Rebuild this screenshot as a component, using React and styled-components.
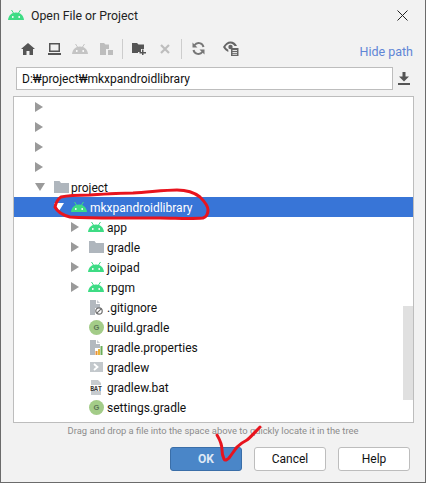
import React from 'react';
import styled, { createGlobalStyle } from 'styled-components';

const GlobalStyle = createGlobalStyle`
  html, body { margin: 0; padding: 0; background: #f2f2f2; }
  body { font-family: Roboto, "Noto Sans CJK KR", sans-serif; font-size: 12px; }
`;

const Dialog = styled.div`
  position: relative;
  width: 426px;
  height: 483px;
  box-sizing: border-box;
  background: #f2f2f2;
  border: 1px solid #6b6b6b;
  border-top: none;
  overflow: hidden;
  color: #111;
`;

const TitleBar = styled.div`
  display: flex;
  align-items: center;
  height: 30px;
  padding-left: 7px;
  gap: 7px;
  font-size: 12.3px;
  color: #222;
`;

const TitleText = styled.span`
  padding-top: 2px;
`;

const CloseButton = styled.button`
  margin-left: auto;
  width: 46px;
  height: 30px;
  border: none;
  padding: 0;
  background: none;
  display: flex;
  align-items: center;
  justify-content: center;
`;

const Toolbar = styled.div`
  display: flex;
  align-items: center;
  height: 37px;
  padding-left: 18px;
  padding-right: 12px;
  gap: 8px;
`;

const ToolIcon = styled.span`
  width: 18px;
  height: 18px;
  margin-left: ${p => p.$push || 0}px;
  display: flex;
  align-items: center;
  justify-content: center;
  flex: none;
`;

const ToolSep = styled.span`
  width: 1px;
  height: 20px;
  background: #cdcdcd;
  margin: 0 -1px;
  flex: none;
`;

const HidePath = styled.a`
  margin-left: auto;
  margin-top: 6px;
  color: #5f86d6;
  font-size: 12.5px;
`;

const PathRow = styled.div`
  display: flex;
  align-items: center;
  padding-left: 15px;
  padding-right: 15px;
  gap: 5px;
`;

const PathInput = styled.div`
  flex: 1;
  height: 23px;
  box-sizing: border-box;
  border: 1px solid #bdbdbd;
  background: #fff;
  padding-left: 5px;
  line-height: 23px;
  font-size: 12px;
  color: #111;
`;

const TreeBox = styled.div`
  position: relative;
  margin: 6px 11px 0 12px;
  height: 327px;
  box-sizing: border-box;
  border: 1px solid #bdbdbd;
  background: #fff;
`;

const ScrollThumb = styled.div`
  position: absolute;
  right: 0;
  top: 209px;
  width: 10px;
  height: 94px;
  background: #e0e0e0;
`;

const Row = styled.div`
  display: flex;
  align-items: center;
  height: 20px;
  padding-left: ${p => p.$indent}px;
  background: ${p => (p.$selected ? '#3875d7' : 'transparent')};
  color: ${p => (p.$selected ? '#fff' : '#111')};
  font-size: 12px;
`;

const RowLabel = styled.span`
  padding-top: 2px;
`;

const ArrowSlot = styled.span`
  width: 16px;
  display: flex;
  align-items: center;
  flex: none;
`;

const IconSlot = styled.span`
  width: 18px;
  height: 16px;
  box-sizing: border-box;
  padding-left: ${p => p.$shift || 0}px;
  display: flex;
  align-items: center;
  justify-content: center;
  flex: none;
  margin-right: 2px;
`;

const Hint = styled.div`
  text-align: center;
  font-size: 9.4px;
  color: #8c8c8c;
  height: 17px;
  line-height: 14px;
  margin-top: 1px;
`;

const ButtonRow = styled.div`
  display: flex;
  justify-content: flex-end;
  gap: 12px;
  padding-right: 15px;
  margin-top: 6px;
`;

const DialogButton = styled.button`
  width: 72px;
  height: 24px;
  box-sizing: border-box;
  border-radius: 3px;
  border: 1px solid ${p => (p.$primary ? '#3a6ea8' : '#bdbdbd')};
  background: ${p => (p.$primary ? '#4a86c8' : '#fff')};
  color: ${p => (p.$primary ? '#dfe9f5' : '#111')};
  font-family: inherit;
  font-size: 12px;
  font-weight: ${p => (p.$primary ? 700 : 400)};
  padding: 0;
`;

const Scribble = styled.svg`
  position: absolute;
  left: -1px;
  top: 0;
  pointer-events: none;
`;

const Android = ({ color = '#3ddc84', muted }) => (
  <svg width="16" height="10" viewBox="0 0 16 10">
    <path d="M0 10C.3 6 3.400 2.500 8 2.500s7.700 3.500 8 7.500z" fill={muted ? '#c4c4c4' : color} />
    <path d="M3.500 0l2 3M12.500 0l-2 3" stroke={muted ? '#c4c4c4' : color} strokeWidth="1" />
    <circle cx="4.800" cy="7" r=".9" fill="#fff" />
    <circle cx="11.200" cy="7" r=".9" fill="#fff" />
  </svg>
);

const Folder = ({ color = '#afb6bd' }) => (
  <svg width="15" height="12" viewBox="0 0 15 12">
    <path d="M0 0h5.500l1.500 2h8v10H0z" fill={color} />
  </svg>
);

const GradleBadge = () => (
  <svg width="15" height="15" viewBox="0 0 15 15">
    <circle cx="7.500" cy="7.500" r="7.500" fill="#a3cc88" />
    <text x="7.500" y="10.300" textAnchor="middle" fontSize="7.500" fontWeight="700" fontFamily="Liberation Sans, sans-serif" fill="#5b7558">G</text>
  </svg>
);

const FileBase = ({ children }) => (
  <svg width="14" height="15" viewBox="0 0 14 15">
    <path d="M1 0h6v4h4v4H6v7H1z" fill="#b3b9bf" />
    <path d="M8 0l3 3H8z" fill="#c9ced2" />
    {children}
  </svg>
);

const GitIgnore = () => (
  <FileBase>
    <circle cx="10" cy="11" r="3.200" fill="#fff" stroke="#6d6d6d" strokeWidth="1.200" />
    <path d="M7.800 13.200l4.400-4.400" stroke="#6d6d6d" strokeWidth="1.200" />
  </FileBase>
);

const Props = () => (
  <FileBase>
    <rect x="6.500" y="11" width="2" height="4" fill="#e8923a" />
    <rect x="9" y="9" width="2" height="6" fill="#e8b53a" />
    <rect x="11.500" y="6" width="2" height="9" fill="#6cae5a" />
  </FileBase>
);

const Shell = () => (
  <svg width="13" height="10" viewBox="0 0 13 10">
    <rect width="13" height="10" fill="#c3c8cc" />
    <path d="M4 2l3.500 3-3.500 3" fill="none" stroke="#fff" strokeWidth="1.800" />
  </svg>
);

const Bat = () => (
  <svg width="14" height="15" viewBox="0 0 14 15">
    <path d="M2 0h7l3 3v12H2z" fill="#c7cbce" />
    <rect x="0" y="5" width="14" height="6" fill="#fff" />
    <text x="7" y="10.500" textAnchor="middle" fontSize="6.500" fontWeight="700" fontFamily="Liberation Mono, monospace" fill="#333">BAT</text>
  </svg>
);

const ArrowRight = () => (
  <svg width="8" height="10" viewBox="0 0 8 10"><path d="M0 0l8 5-8 5z" fill="#9a9a9a" /></svg>
);

const ArrowDown = ({ color = '#9a9a9a' }) => (
  <svg width="10" height="8" viewBox="0 0 10 8"><path d="M0 0h10L5 8z" fill={color} /></svg>
);

const rows = [
  { indent: 21, arrow: 'right' },
  { indent: 21, arrow: 'right' },
  { indent: 21, arrow: 'right' },
  { indent: 21, arrow: 'right' },
  { indent: 21, arrow: 'down', icon: <Folder />, shift: 2, label: 'project' },
  { indent: 40, arrow: 'downWhite', icon: <Android />, label: 'mkxpandroidlibrary', selected: true },
  { indent: 57, arrow: 'right', icon: <Android />, label: 'app' },
  { indent: 57, arrow: 'right', icon: <Folder />, label: 'gradle' },
  { indent: 57, arrow: 'right', icon: <Android />, label: 'joipad' },
  { indent: 57, arrow: 'right', icon: <Android />, label: 'rpgm' },
  { indent: 73, icon: <GitIgnore />, label: '.gitignore' },
  { indent: 73, icon: <GradleBadge />, label: 'build.gradle' },
  { indent: 73, icon: <Props />, label: 'gradle.properties' },
  { indent: 73, icon: <Shell />, label: 'gradlew' },
  { indent: 73, icon: <Bat />, label: 'gradlew.bat' },
  { indent: 73, icon: <GradleBadge />, label: 'settings.gradle' },
];

const c = '#555';
const d = '#bdbdbd';

export default function App() {
  return (
    <>
      <GlobalStyle />
      <Dialog>
        <TitleBar>
          <Android />
          <TitleText>Open File or Project</TitleText>
          <CloseButton>
            <svg width="11" height="11" viewBox="0 0 11 11"><path d="M.5.5l10 10M10.500.5l-10 10" stroke="#222" strokeWidth="1" /></svg>
          </CloseButton>
        </TitleBar>
        <Toolbar>
          <ToolIcon><svg width="14" height="12" viewBox="0 0 14 12"><path d="M7 0l7 6h-2v6H8.500V8h-3v4H2V6H0z" fill={c} /></svg></ToolIcon>
          <ToolIcon><svg width="13" height="12" viewBox="0 0 13 12"><path d="M1 0h11v9H1zM2.500 1.500v6h8v-6zM0 10h13v2H0z" fillRule="evenodd" fill={c} /></svg></ToolIcon>
          <ToolIcon><Android muted /></ToolIcon>
          <ToolIcon><svg width="13" height="12" viewBox="0 0 13 12"><path d="M0 0h4l1.500 1.500H9V6H6v6H0z" fill={d} /><rect x="8" y="7" width="5" height="5" fill={d} /></svg></ToolIcon>
          <ToolSep />
          <ToolIcon><svg width="15" height="12" viewBox="0 0 15 12"><path d="M0 0h5l1.500 1.500H12V6H9v3H6v1H0z" fill={c} /><path d="M10 6.500h1.500V9H14v1.500h-2.500V12H10v-1.500H7.500V9H10z" fill={c} /></svg></ToolIcon>
          <ToolIcon><svg width="10" height="10" viewBox="0 0 10 10"><path d="M1 1l8 8M9 1l-8 8" stroke={d} strokeWidth="2.200" /></svg></ToolIcon>
          <ToolSep />
          <ToolIcon><svg width="13" height="13" viewBox="0 0 13 13"><path d="M11.500 5A5 5 0 0 0 2.500 3.200M1.500 8a5 5 0 0 0 9 1.800" fill="none" stroke="#777" strokeWidth="2" /><path d="M.5 .5v5h5zM12.500 12.500v-5h-5z" fill="#777" /></svg></ToolIcon>
          <ToolIcon $push={7}><svg width="16" height="15" viewBox="0 0 16 15"><path d="M0 6c2-3.500 4.500-5.500 7.500-5.500S13 2.500 14 5h-2.500C10.500 3.500 9 2.500 7.500 2.500 5.500 2.500 3.500 4 2.300 6c.7 1.200 1.700 2.200 3 2.800V11C3 10 1.200 8.200 0 6z" fill="#666" /><circle cx="7.500" cy="6" r="2.200" fill="#666" /><rect x="8" y="7" width="7.500" height="8" fill="#666" /><path d="M9.500 9.500h4.500M9.500 11.500h4.500M9.500 13.300h4.500" stroke="#f2f2f2" strokeWidth=".9" /></svg></ToolIcon>
          <HidePath>Hide path</HidePath>
        </Toolbar>
        <PathRow>
          <PathInput>D:₩project₩mkxpandroidlibrary</PathInput>
          <svg width="12" height="13" viewBox="0 0 12 13"><path d="M4.500 0h3v4.500H11L6 9.500 1 4.500h3.500zM0 11h12v2H0z" fill={c} /></svg>
        </PathRow>
        <TreeBox>
          {rows.map((r, i) => (
            <Row key={i} $indent={r.indent} $selected={r.selected}>
              {r.arrow && (
                <ArrowSlot>
                  {r.arrow === 'right' && <ArrowRight />}
                  {r.arrow === 'down' && <ArrowDown />}
                  {r.arrow === 'downWhite' && <ArrowDown color="#fff" />}
                </ArrowSlot>
              )}
              {r.icon && <IconSlot $shift={r.shift}>{r.icon}</IconSlot>}
              {r.label && <RowLabel>{r.label}</RowLabel>}
            </Row>
          ))}
          <ScrollThumb />
        </TreeBox>
        <Hint>Drag and drop a file into the space above to quickly locate it in the tree</Hint>
        <ButtonRow>
          <DialogButton $primary>OK</DialogButton>
          <DialogButton>Cancel</DialogButton>
          <DialogButton>Help</DialogButton>
        </ButtonRow>
        <Scribble width="426" height="483" viewBox="0 0 426 483" fill="none" stroke="#e8141e" strokeWidth="3" strokeLinecap="round" strokeLinejoin="round">
          <path d="M55 207C56 202 58 199 61 197C70 195 80 195 90 195C105 194 120 193 133 193C150 192 165 190 177 190C188 190 195 193 200 197C205 202 208 206 208 210C208 214 206 217 203 218C190 219 175 218 160 218C145 218 130 218 117 218C100 218 85 218 70 217C62 215 57 211 55 207Z" />
          <path d="M217 435C220 440 222 445 222 450C222 454 223 457 224 459C225 461 227 460 229 458C232 454 234 451 237 447C240 444 243 442 247 440C252 436 256 431 260 427" />
        </Scribble>
      </Dialog>
    </>
  );
}
